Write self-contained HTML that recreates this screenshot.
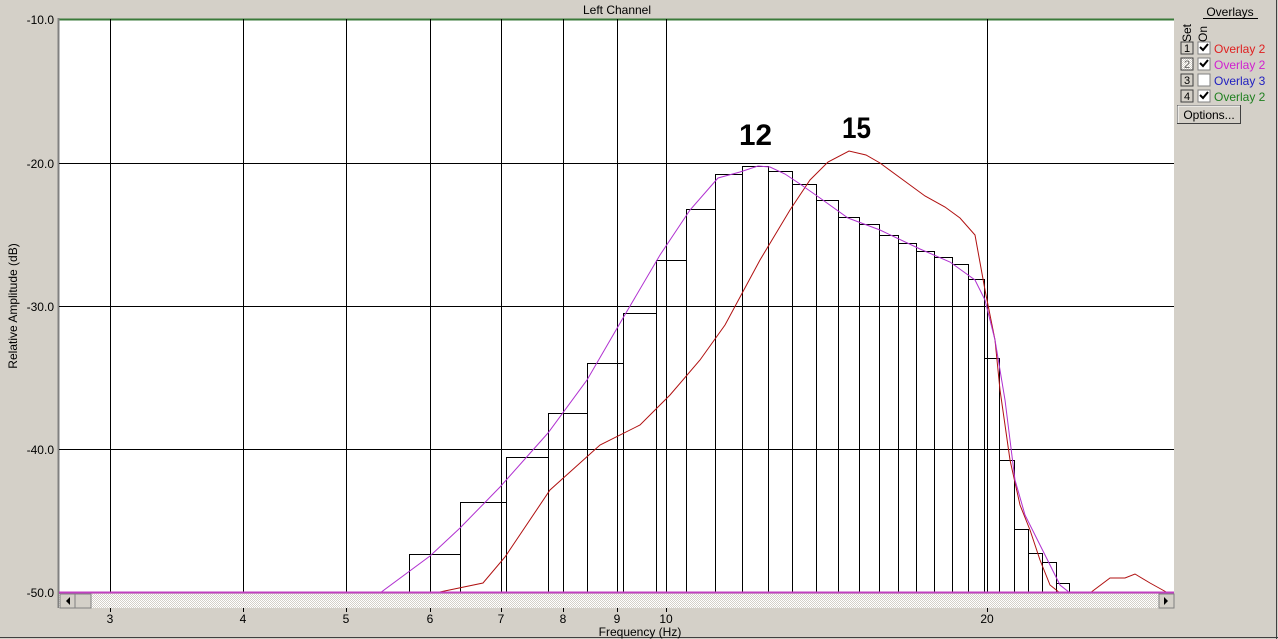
<!DOCTYPE html>
<html><head><meta charset="utf-8"><style>
html,body{margin:0;padding:0;background:#d4d0c8;overflow:hidden}
svg{display:block;font-family:"Liberation Sans",Arial,sans-serif}
</style></head><body>
<svg width="1278" height="639" viewBox="0 0 1278 639" xmlns="http://www.w3.org/2000/svg">
<defs>
<pattern id="h" width="2" height="2" patternUnits="userSpaceOnUse"><rect width="2" height="2" fill="#fff"/><rect width="1" height="1" fill="#d4d0c8"/><rect x="1" y="1" width="1" height="1" fill="#d4d0c8"/></pattern>
</defs>
<rect x="0" y="0" width="1278" height="639" fill="#d4d0c8"/>
<line x1="1276.5" y1="0" x2="1276.5" y2="639" stroke="#404040"/>
<line x1="0" y1="637.5" x2="1278" y2="637.5" stroke="#404040"/>
<rect x="59" y="19" width="1115" height="574" fill="#fff"/>
<line x1="59" y1="19.5" x2="1174" y2="19.5" stroke="#3a7a3a" stroke-width="2"/>
<line x1="58.5" y1="18" x2="58.5" y2="608" stroke="#808080" stroke-width="2"/>
<g stroke="#000" stroke-width="1">
<line x1="110.5" y1="19" x2="110.5" y2="593"/><line x1="243.5" y1="19" x2="243.5" y2="593"/>
<line x1="346.5" y1="19" x2="346.5" y2="593"/><line x1="430.5" y1="19" x2="430.5" y2="593"/>
<line x1="501.5" y1="19" x2="501.5" y2="593"/><line x1="563.5" y1="19" x2="563.5" y2="593"/>
<line x1="617.5" y1="19" x2="617.5" y2="593"/><line x1="666.5" y1="19" x2="666.5" y2="593"/>
<line x1="987.5" y1="19" x2="987.5" y2="593"/>
<line x1="59" y1="163.5" x2="1174" y2="163.5"/><line x1="59" y1="306.5" x2="1174" y2="306.5"/>
<line x1="59" y1="449.5" x2="1174" y2="449.5"/>
</g>
<path fill="none" stroke="#000" stroke-width="1" d="
M409.5 593V554.5H460.5V593 M460.5 593V502.5H506.5V593 M506.5 593V457.5H548.5V593 M548.5 593V413.5H587.5V593
M587.5 593V363.5H623.5V593 M623.5 593V313.5H656.5V593 M656.5 593V260.5H686.5V593 M686.5 593V209.5H715.5V593
M715.5 593V174.5H742.5V593 M742.5 593V166.5H768.5V593 M768.5 593V171.5H792.5V593 M792.5 593V184.5H816.5V593
M816.5 593V200.5H838.5V593 M838.5 593V217.5H859.5V593 M859.5 593V224.5H879.5V593 M879.5 593V235.5H898.5V593
M898.5 593V243.5H916.5V593 M916.5 593V251.5H934.5V593 M934.5 593V257.5H952.5V593 M952.5 593V264.5H968.5V593
M968.5 593V279.5H984.5V593 M984.5 593V358.5H999.5V593 M999.5 593V460.5H1014.5V593 M1014.5 593V529.5H1028.5V593
M1028.5 593V553.5H1042.5V593 M1042.5 593V562.5H1056.5V593 M1056.5 593V583.5H1069.5V593"/>
<polyline fill="none" stroke="#b01010" stroke-width="1" points="380,593 435,593 483,583 505,557 550,490 600,445 640,425 670,395 700,360 725,325 760,260 790,210 810,180 828,162 849,151 866,155 880,163 910,185 925,196 945,207 960,218 975,235 985,290 995,340 1000,390 1010,460 1020,505 1030,530 1040,560 1050,585 1060,593 1090,593 1110,578 1125,578 1135,574 1150,583 1168,593"/>
<polyline fill="none" stroke="#b030d0" stroke-width="1" points="380,593 430,556 460,528 500,487 548,433 587,380 623,318 660,255 690,210 718,178 740,172 758,166 770,167 785,174 800,184 820,198 848,218 880,230 920,249 950,262 975,280 985,300 995,340 1005,400 1015,480 1025,515 1040,545 1060,585 1070,593"/>
<line x1="59" y1="592.5" x2="1174" y2="592.5" stroke="#c040c0" stroke-width="2"/>
<rect x="59" y="594" width="1115" height="14" fill="url(#h)"/>
<rect x="60" y="594" width="15" height="14" fill="#d4d0c8" stroke="#808080"/>
<path d="M70 597v8l-4-4z" fill="#000"/>
<rect x="75" y="594" width="16" height="14" fill="#d4d0c8" stroke="#808080"/>
<rect x="1159" y="594" width="15" height="14" fill="#d4d0c8" stroke="#808080"/>
<path d="M1164 597v8l4-4z" fill="#000"/>
<g font-size="12" fill="#000">
<text x="617" y="14" text-anchor="middle">Left Channel</text>
<g text-anchor="end"><text x="54" y="24">-10.0</text><text x="54" y="168">-20.0</text><text x="54" y="311">-30.0</text><text x="54" y="454">-40.0</text><text x="54" y="597">-50.0</text></g>
<g text-anchor="middle"><text x="110" y="623">3</text><text x="243" y="623">4</text><text x="346" y="623">5</text><text x="430" y="623">6</text><text x="501" y="623">7</text><text x="563" y="623">8</text><text x="617" y="623">9</text><text x="666" y="623">10</text><text x="987" y="623">20</text>
<text x="640" y="636">Frequency (Hz)</text></g>
<text transform="translate(17,306) rotate(-90)" text-anchor="middle">Relative Amplitude (dB)</text>
</g>
<g stroke="#000" stroke-width="1"><line x1="110.5" y1="608" x2="110.5" y2="612"/><line x1="243.5" y1="608" x2="243.5" y2="612"/><line x1="346.5" y1="608" x2="346.5" y2="612"/><line x1="430.5" y1="608" x2="430.5" y2="612"/><line x1="501.5" y1="608" x2="501.5" y2="612"/><line x1="563.5" y1="608" x2="563.5" y2="612"/><line x1="617.5" y1="608" x2="617.5" y2="612"/><line x1="666.5" y1="608" x2="666.5" y2="612"/><line x1="987.5" y1="608" x2="987.5" y2="612"/></g>
<g font-size="30" font-weight="bold" fill="#000"><text x="739" y="145" textLength="33" lengthAdjust="spacingAndGlyphs">12</text><text x="842" y="138" textLength="29" lengthAdjust="spacingAndGlyphs">15</text></g>
<g font-size="12">
<text x="1230" y="16" text-anchor="middle">Overlays</text>
<line x1="1203" y1="18.5" x2="1258" y2="18.5" stroke="#000"/>
<text transform="translate(1191,42) rotate(-90)">Set</text>
<text transform="translate(1207,42) rotate(-90)">On</text>
</g>
<g font-size="12">
<g><rect x="1181" y="42" width="12" height="12" fill="#d4d0c8" stroke="#404040"/><text x="1184" y="52" font-size="11">1</text>
<rect x="1198" y="42" width="12" height="12" fill="#fff" stroke="#808080"/><path d="M1200 47l3 3 5-6" fill="none" stroke="#000" stroke-width="2"/><text x="1214" y="53" fill="#e02020">Overlay 2</text></g>
<g><rect x="1181" y="58" width="12" height="12" fill="url(#h)" stroke="#404040"/><text x="1184" y="68" font-size="11" fill="#666">2</text>
<rect x="1198" y="58" width="12" height="12" fill="#fff" stroke="#808080"/><path d="M1200 63l3 3 5-6" fill="none" stroke="#000" stroke-width="2"/><text x="1214" y="69" fill="#d020d0">Overlay 2</text></g>
<g><rect x="1181" y="74" width="12" height="12" fill="#d4d0c8" stroke="#404040"/><text x="1184" y="84" font-size="11">3</text>
<rect x="1198" y="74" width="12" height="12" fill="#fff" stroke="#808080"/><text x="1214" y="85" fill="#2020c0">Overlay 3</text></g>
<g><rect x="1181" y="90" width="12" height="12" fill="#d4d0c8" stroke="#404040"/><text x="1184" y="100" font-size="11">4</text>
<rect x="1198" y="90" width="12" height="12" fill="#fff" stroke="#808080"/><path d="M1200 95l3 3 5-6" fill="none" stroke="#000" stroke-width="2"/><text x="1214" y="101" fill="#208020">Overlay 2</text></g>
<rect x="1177.5" y="105.5" width="63" height="18" fill="#d4d0c8" stroke="#404040"/>
<path d="M1178 123V106H1240" fill="none" stroke="#fff"/>
<text x="1209" y="119" text-anchor="middle">Options...</text>
</g>
</svg>
</body></html>
